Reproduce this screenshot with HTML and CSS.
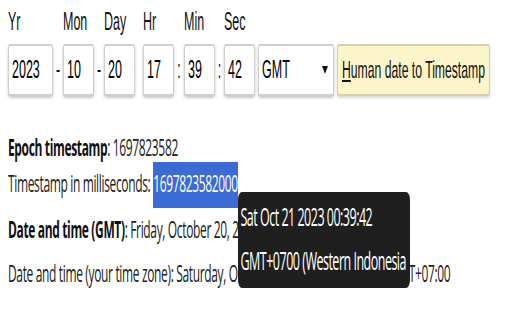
FILE: index.html
```html
<!DOCTYPE html>
<html lang="en">

<head>
    <meta charset="UTF-8">
    <meta name="viewport" content="width=device-width, initial-scale=1.0">
    <title>Epoch Converter</title>
    <link rel="stylesheet" href="styles.css">
</head>

<body>

    <div class="page">

        <form class="converter">
            <label class="field">
                <span class="label">Yr</span>
                <input class="num year" type="text" value="2023">
            </label>
            <span class="sep">-</span>
            <label class="field">
                <span class="label">Mon</span>
                <input class="num" type="text" value="10">
            </label>
            <span class="sep">-</span>
            <label class="field">
                <span class="label">Day</span>
                <input class="num" type="text" value="20">
            </label>
            <label class="field hour">
                <span class="label">Hr</span>
                <input class="num" type="text" value="17">
            </label>
            <span class="sep">:</span>
            <label class="field">
                <span class="label">Min</span>
                <input class="num" type="text" value="39">
            </label>
            <span class="sep narrow">:</span>
            <label class="field">
                <span class="label">Sec</span>
                <input class="num" type="text" value="42">
            </label>
            <div class="tz">
                <select class="tz-select">
                    <option>GMT</option>
                    <option>Local time</option>
                </select>
                <span class="tz-arrow"></span>
            </div>
            <button class="convert" type="button"><u>H</u>uman date to Timestamp</button>
        </form>

        <div class="info">
            <p class="line"><b>Epoch timestamp</b>: 1697823582</p>
            <p class="line">Timestamp in milliseconds: <span class="picked">1697823582000</span></p>
            <p class="line gap"><b>Date and time (GMT)</b>: Friday, October 20, 2023 5:39:42 PM</p>
            <p class="line gap">Date and time (your time zone): Saturday, October 21, 2023 12:39:42 AM GMT+07:00</p>
        </div>

        <div class="tooltip">Sat Oct 21 2023 00:39:42<br>GMT+0700 (Western Indonesia Time)</div>

    </div>

</body>

</html>
```

FILE: styles.css
```css
* {
    margin: 0;
    padding: 0;
    box-sizing: border-box;
}

html,
body {
    height: 320px;
    background: #fff;
}

html {
    overflow: hidden;
}

/* the whole capture is stretched twice as tall as it is wide */
.page {
    position: relative;
    width: 512px;
    height: 160px;
    padding: 0 8px;
    transform: scaleY(2);
    transform-origin: 0 0;
}

/* top row: date fields, time zone, button */
.converter {
    display: flex;
    align-items: flex-end;
    padding-top: 3.5px;
    font-family: "Liberation Sans", Arial, sans-serif;
    font-size: 12.5px;
    color: #111;
}

.field {
    display: flex;
    flex-direction: column;
}

.field .label {
    line-height: 15px;
    margin-bottom: 3.5px;
}

.hour {
    margin-left: 8px;
}

.num {
    width: 31px;
    height: 26px;
    padding: 0 3px;
    border: 1px solid #cfcfcf;
    border-radius: 2px;
    box-shadow: 0 1px 2px rgba(0, 0, 0, 0.22);
    font: inherit;
    color: #000;
    outline: none;
}

.num.year {
    width: 45px;
}

.sep {
    width: 10px;
    height: 26px;
    line-height: 26px;
    text-align: center;
}

.sep.narrow {
    width: 9px;
}

.tz {
    position: relative;
    margin-left: 3px;
}

.tz-select {
    display: block;
    width: 76px;
    height: 26px;
    padding: 0 3px;
    border: 1px solid #cfcfcf;
    border-radius: 2px;
    box-shadow: 0 1px 2px rgba(0, 0, 0, 0.22);
    background: #fff;
    font: inherit;
    color: #000;
    appearance: none;
    -webkit-appearance: none;
    outline: none;
}

.tz-arrow {
    position: absolute;
    top: 11px;
    right: 6px;
    width: 0;
    height: 0;
    border-left: 3px solid transparent;
    border-right: 3px solid transparent;
    border-top: 4px solid #111;
}

.convert {
    width: 153px;
    height: 26px;
    margin-left: 3px;
    padding: 0 4px;
    border: 1px solid #d6cfae;
    border-radius: 2px;
    background: #fcf5c9;
    box-shadow: 0 1px 2px rgba(0, 0, 0, 0.15);
    font: inherit;
    font-size: 12.2px;
    color: #111;
    white-space: nowrap;
}

/* results below the form */
.info {
    padding-top: 16.5px;
    font-family: "Open Sans", "Liberation Sans", sans-serif;
    font-size: 12px;
    letter-spacing: -0.35px;
    color: #222;
}

.line {
    line-height: 18.5px;
    white-space: nowrap;
}

.line.gap {
    margin-top: 4px;
}

.line b {
    font-weight: 700;
    color: #111;
}

.picked {
    padding: 2px 0 3.5px;
    background: #3b6bd5;
    color: #fff;
}

.tooltip {
    position: absolute;
    left: 238px;
    top: 96px;
    width: 172px;
    height: 48px;
    padding: 1.5px 2.5px 0;
    overflow: hidden;
    border-radius: 4px;
    background: #1f1f1f;
    font-family: "Open Sans", "Liberation Sans", sans-serif;
    font-size: 12.5px;
    letter-spacing: -0.5px;
    line-height: 22px;
    color: #fff;
}
```
